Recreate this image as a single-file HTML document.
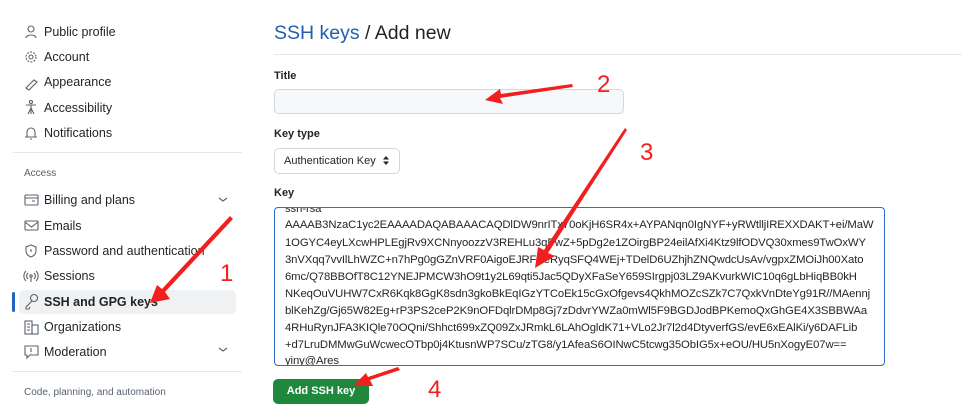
<!DOCTYPE html>
<html><head><meta charset="utf-8"><style>
*{box-sizing:border-box;margin:0;padding:0}
body{width:962px;height:411px;overflow:hidden;background:#fff;font-family:"Liberation Sans",Arial,sans-serif;color:#1f2328;position:relative}
.a{position:absolute}
.nav{position:absolute;left:44px;font-size:12.5px;color:#1f2328;line-height:16px}
.sec{position:absolute;left:24px;font-size:10px;color:#59636e}
.hr{position:absolute;height:1px;background:#e5e8eb}
.lbl{position:absolute;left:274px;font-size:11px;font-weight:bold}
.ta{position:absolute;left:274px;top:207px;width:611px;height:159px;border:1.5px solid #2f6ec5;border-radius:4px;overflow:hidden}
.ta div{position:absolute;left:10px;font-size:11.3px;color:#1f2328;white-space:nowrap;letter-spacing:-0.1px}
</style></head><body>
<div class="nav" style="top:24px">Public profile</div>
<div class="nav" style="top:49px">Account</div>
<div class="nav" style="top:74px">Appearance</div>
<div class="nav" style="top:100px">Accessibility</div>
<div class="nav" style="top:125px">Notifications</div>
<div class="hr" style="left:13px;top:152px;width:229px"></div>
<div class="sec" style="top:168px">Access</div>
<div class="nav" style="top:192px">Billing and plans</div>
<div class="nav" style="top:218px">Emails</div>
<div class="nav" style="top:243px">Password and authentication</div>
<div class="nav" style="top:268px">Sessions</div>
<div class="a" style="left:19px;top:290px;width:217px;height:24px;background:#eff1f3;border-radius:5px"></div>
<div class="a" style="left:12px;top:292px;width:3px;height:20px;background:#2264c4;border-radius:2px"></div>
<div class="nav" style="top:294px;font-weight:bold">SSH and GPG keys</div>
<div class="nav" style="top:319px">Organizations</div>
<div class="nav" style="top:344px">Moderation</div>
<div class="hr" style="left:13px;top:371px;width:229px"></div>
<div class="sec" style="top:387px">Code, planning, and automation</div>
<svg class="a" style="left:0;top:0" width="260" height="411" fill="none" stroke="#59636e" stroke-width="1.1">
<circle cx="31" cy="29" r="3"/><path d="M26 38c0-4 10-4 10 0"/>
<circle cx="31" cy="57" r="2"/><circle cx="31" cy="57" r="5" stroke-dasharray="2 1.2"/>
<path d="M26 88l8-8 3 2-8 8z"/>
<circle cx="31" cy="102" r="1.5"/><path d="M26 105h10M31 105v9M28 114l3-6 3 6"/>
<path d="M27 137v-5a4 4 0 018 0v5h2H25zM30 139h2"/>
<rect x="25" y="195" width="13" height="10" rx="1"/><path d="M25 198h13M32 201h3"/>
<rect x="25" y="221" width="13" height="9" rx="1"/><path d="M25 222l6.5 5 6.5-5"/>
<path d="M31 245l5 2v4c0 3-2.5 5-5 6-2.5-1-5-3-5-6v-4z"/><path d="M31 249v3"/>
<circle cx="31" cy="276" r="1.2"/><path d="M31 277v5M28 273a4 4 0 000 6M34 273a4 4 0 010 6M26 271a7 7 0 000 10M36 271a7 7 0 010 10"/>
<circle cx="34" cy="298" r="3.5"/><path d="M32 301l-6 6v2h3l1-2"/>
<rect x="25" y="321" width="7" height="13"/><rect x="32" y="325" width="6" height="9"/><path d="M27 324h3M27 327h3M27 330h3"/>
<path d="M25 346h13v9h-8l-3 3v-3h-2z"/><path d="M31 348v4M31 353.5v.5"/>
<path d="M219 198l4 3 4-3M219 348l4 3 4-3"/>
</svg>
<div class="a" style="left:274px;top:22px;font-size:19.5px;color:#1f2328"><span style="color:#2160b0">SSH keys</span> / Add new</div>
<div class="hr" style="left:274px;top:54px;width:690px"></div>
<div class="lbl" style="top:70px">Title</div>
<div class="a" style="left:274px;top:89px;width:350px;height:25px;background:#f6f8fa;border:1px solid #d1d9e0;border-radius:5px"></div>
<div class="lbl" style="top:128px">Key type</div>
<div class="a" style="left:274px;top:148px;width:126px;height:26px;border:1px solid #d1d9e0;border-radius:5px;font-size:11px;padding:6px 0 0 9px;color:#1f2328">Authentication Key</div>
<svg class="a" style="left:382px;top:155px" width="8" height="11" fill="#1f2328"><path d="M1 4.5L4 1l3 3.5zM1 6.5L4 10l3-3.5z"/></svg>
<div class="lbl" style="top:187px">Key</div>
<div class="ta">
<div style="top:-5px">ssh-rsa</div>
<div style="top:11px">AAAAB3NzaC1yc2EAAAADAQABAAACAQDlDW9nrITx70oKjH6SR4x+AYPANqn0IgNYF+yRWtlljIREXXDAKT+ei/MaW</div>
<div style="top:29px">1OGYC4eyLXcwHPLEgjRv9XCNnyoozzV3REHLu3qPwZ+5pDg2e1ZOirgBP24eilAfXi4Ktz9lfODVQ30xmes9TwOxWY</div>
<div style="top:46px">3nVXqq7vvIlLhWZC+n7hPg0gGZnVRF0AigoEJRFXeRyqSFQ4WEj+TDelD6UZhjhZNQwdcUsAv/vgpxZMOiJh00Xato</div>
<div style="top:63px">6mc/Q78BBOfT8C12YNEJPMCW3hO9t1y2L69qti5Jac5QDyXFaSeY659SIrgpj03LZ9AKvurkWIC10q6gLbHiqBB0kH</div>
<div style="top:80px">NKeqOuVUHW7CxR6Kqk8GgK8sdn3gkoBkEqIGzYTCoEk15cGxOfgevs4QkhMOZcSZk7C7QxkVnDteYg91R//MAennj</div>
<div style="top:97px">blKehZg/Gj65W82Eg+rP3PS2ceP2K9nOFDqlrDMp8Gj7zDdvrYWZa0mWl5F9BGDJodBPKemoQxGhGE4X3SBBWAa</div>
<div style="top:114px">4RHuRynJFA3KIQle70OQni/Shhct699xZQ09ZxJRmkL6LAhOgldK71+VLo2Jr7l2d4DtyverfGS/evE6xEAlKi/y6DAFLib</div>
<div style="top:131px">+d7LruDMMwGuWcwecOTbp0j4KtusnWP7SCu/zTG8/y1AfeaS6OINwC5tcwg35ObIG5x+eOU/HU5nXogyE07w==</div>
<div style="top:147px">yiny@Ares</div>
</div>
<div class="a" style="left:273px;top:379px;width:96px;height:25px;background:#1f883d;border-radius:5px;color:#fff;font-size:11px;font-weight:bold;text-align:center;line-height:25px">Add SSH key</div>
<svg class="a" style="left:0;top:0" width="962" height="411">
<g fill="#f21f1f">
<polygon points="230,216 233,219 165,292 170,299 150,303 157,285 162,289"/>
<polygon points="572,84 573,87 500,98 503,104 485,100 500,89 501,94"/>
<polygon points="625,128 627,130 548,253 555,256 535,268 538,247 544,250"/>
<polygon points="398,367 400,370 370,380 373,386 353,386 366,373 368,377"/>
<text x="220" y="281" font-size="24" font-family="Liberation Sans" fill="#f21f1f">1</text>
<text x="597" y="92" font-size="24" font-family="Liberation Sans" fill="#f21f1f">2</text>
<text x="640" y="160" font-size="24" font-family="Liberation Sans" fill="#f21f1f">3</text>
<text x="428" y="397" font-size="24" font-family="Liberation Sans" fill="#f21f1f">4</text>
</g></svg>
</body></html>
